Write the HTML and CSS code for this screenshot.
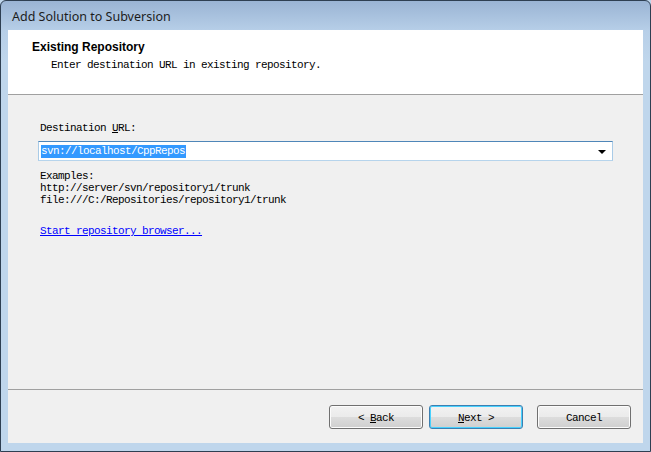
FILE: index.html
```html
<!DOCTYPE html>
<html>
<head>
<meta charset="utf-8">
<link rel="stylesheet" href="styles.css">
</head>
<body>
<div class="window">
  <div class="titlebar"><span class="title">Add Solution to Subversion</span></div>
  <div class="client">
    <div class="header">
      <div class="h-title">Existing Repository</div>
      <div class="h-sub mono">Enter destination URL in existing repository.</div>
    </div>
    <div class="body">
      <div class="content mono">
        <div class="label">Destination <u>U</u>RL:</div>
        <div class="combo">
          <span class="sel">svn://localhost/CppRepos</span>
          <span class="arrow"></span>
        </div>
        <div class="examples">
          <div>Examples:</div>
          <div>http://server/svn/repository1/trunk</div>
          <div>file:///C:/Repositories/repository1/trunk</div>
        </div>
        <a class="link" href="#">Start repository browser...</a>
      </div>
      <div class="footer">
        <div class="buttons mono">
          <div class="btn">&lt;&nbsp;<u>B</u>ack</div>
          <div class="btn default"><u>N</u>ext&nbsp;&gt;</div>
          <div class="btn cancel">Cancel</div>
        </div>
      </div>
    </div>
  </div>
</div>
</body>
</html>
```
FILE: styles.css
```css
html, body {
  margin: 0;
  padding: 0;
  background: #bfd6ec;
}
.window {
  width: 651px;
  height: 452px;
  box-sizing: border-box;
  border: 1px solid #2e3f52;
  border-radius: 6px 6px 0 0;
  background: linear-gradient(to bottom, #9ab4d4 0px, #b7cfe8 30px, #bfd6ec 60px, #bfd6ec 100%);
  display: flex;
  flex-direction: column;
  padding: 0 7px 8px 7px;
}
.titlebar {
  height: 29px;
  flex: none;
  display: flex;
  align-items: flex-start;
}
.title {
  font-family: "Noto Sans", "Open Sans", sans-serif;
  font-size: 12.5px;
  color: #1c1c1c;
  margin-left: 4px;
  margin-top: 6px;
  line-height: 20px;
}
.client {
  flex: 1;
  display: flex;
  flex-direction: column;
  background: #f0f0f0;
}
.mono {
  font-family: "Liberation Mono", "Courier New", monospace;
  font-size: 11px;
  letter-spacing: -0.6px;
  line-height: 12px;
  color: #000;
}
.header {
  height: 65px;
  background: #fff;
  border-bottom: 1px solid #a0a0a0;
  box-sizing: border-box;
  flex: none;
  padding-top: 10px;
  padding-left: 24px;
}
.h-title {
  font-family: "Liberation Sans", Arial, sans-serif;
  font-weight: bold;
  font-size: 12px;
  line-height: 14px;
  color: #000;
}
.h-sub {
  margin-top: 5px;
  padding-left: 19px;
}
.body {
  flex: 1;
  display: flex;
  flex-direction: column;
}
.content {
  flex: 1;
  padding-left: 30px;
  padding-right: 30px;
  padding-top: 27px;
}
.label {
  padding-left: 2px;
}
.label u, .btn u {
  text-decoration: underline;
  text-underline-offset: 1px;
}
.combo {
  margin-top: 7px;
  height: 20px;
  box-sizing: border-box;
  background: #fff;
  border: 1px solid;
  border-color: #4f86b8 #a9cbe7 #b6d4ec #a9cbe7;
  display: flex;
  align-items: center;
  padding-left: 2px;
  padding-right: 6px;
}
.sel {
  background: #3399ff;
  color: #fff;
  line-height: 13px;
  height: 13px;
  padding-right: 1px;
}
.arrow {
  margin-left: auto;
  width: 0;
  height: 0;
  border-left: 4px solid transparent;
  border-right: 4px solid transparent;
  border-top: 4px solid #000;
  margin-top: 2px;
}
.examples {
  margin-top: 9px;
  padding-left: 2px;
}
.link {
  display: inline-block;
  margin-top: 19px;
  margin-left: 2px;
  color: #0000ff;
  text-decoration: underline;
  text-underline-offset: 1px;
}
.footer {
  flex: none;
  height: 54px;
  border-top: 1px solid #a0a0a0;
  box-sizing: border-box;
  padding-top: 15px;
  padding-right: 12px;
}
.buttons {
  display: flex;
  justify-content: flex-end;
  gap: 6px;
}
.btn {
  width: 94px;
  height: 24px;
  box-sizing: border-box;
  border: 1px solid #707070;
  border-radius: 3px;
  background: linear-gradient(to bottom, #f2f2f2 0%, #ebebeb 50%, #dddddd 50%, #cfcfcf 100%);
  box-shadow: inset 0 0 0 1px #fcfcfc;
  display: flex;
  align-items: center;
  justify-content: center;
  padding-top: 1px;
}
.btn.default {
  border-color: #3c7fb1;
  box-shadow: inset 0 0 0 1px #48d1fe;
}
.btn.cancel {
  margin-left: 8px;
}
```
